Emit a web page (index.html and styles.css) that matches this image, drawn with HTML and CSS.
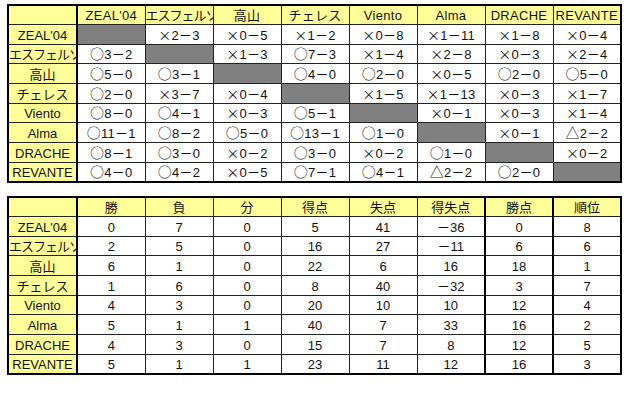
FILE: index.html
```html
<!DOCTYPE html>
<html lang="ja">
<head>
<meta charset="utf-8">
<title>リーグ戦績</title>
<link rel="stylesheet" href="styles.css">
</head>
<body>
<div class="sheet">
  <table class="grid results">
    <colgroup><col class="c-label"><col span="8" class="c-data"></colgroup>
    <tr class="head">
      <td class="label"></td>
      <td>ZEAL'04</td>
      <td class="tight">エスフェルソ</td>
      <td>高山</td>
      <td>チェレス</td>
      <td>Viento</td>
      <td>Alma</td>
      <td>DRACHE</td>
      <td>REVANTE</td>
    </tr>
    <tr>
      <td class="label">ZEAL'04</td>
      <td class="self"></td>
      <td><span class="mk">×</span>2－3</td>
      <td><span class="mk">×</span>0－5</td>
      <td><span class="mk">×</span>1－2</td>
      <td><span class="mk">×</span>0－8</td>
      <td><span class="mk">×</span>1－11</td>
      <td><span class="mk">×</span>1－8</td>
      <td><span class="mk">×</span>0－4</td>
    </tr>
    <tr>
      <td class="label tight">エスフェルソ</td>
      <td><span class="mk o">○</span>3－2</td>
      <td class="self"></td>
      <td><span class="mk">×</span>1－3</td>
      <td><span class="mk o">○</span>7－3</td>
      <td><span class="mk">×</span>1－4</td>
      <td><span class="mk">×</span>2－8</td>
      <td><span class="mk">×</span>0－3</td>
      <td><span class="mk">×</span>2－4</td>
    </tr>
    <tr>
      <td class="label">高山</td>
      <td><span class="mk o">○</span>5－0</td>
      <td><span class="mk o">○</span>3－1</td>
      <td class="self"></td>
      <td><span class="mk o">○</span>4－0</td>
      <td><span class="mk o">○</span>2－0</td>
      <td><span class="mk">×</span>0－5</td>
      <td><span class="mk o">○</span>2－0</td>
      <td><span class="mk o">○</span>5－0</td>
    </tr>
    <tr>
      <td class="label">チェレス</td>
      <td><span class="mk o">○</span>2－0</td>
      <td><span class="mk">×</span>3－7</td>
      <td><span class="mk">×</span>0－4</td>
      <td class="self"></td>
      <td><span class="mk">×</span>1－5</td>
      <td><span class="mk">×</span>1－13</td>
      <td><span class="mk">×</span>0－3</td>
      <td><span class="mk">×</span>1－7</td>
    </tr>
    <tr>
      <td class="label">Viento</td>
      <td><span class="mk o">○</span>8－0</td>
      <td><span class="mk o">○</span>4－1</td>
      <td><span class="mk">×</span>0－3</td>
      <td><span class="mk o">○</span>5－1</td>
      <td class="self"></td>
      <td><span class="mk">×</span>0－1</td>
      <td><span class="mk">×</span>0－3</td>
      <td><span class="mk">×</span>1－4</td>
    </tr>
    <tr>
      <td class="label">Alma</td>
      <td><span class="mk o">○</span>11－1</td>
      <td><span class="mk o">○</span>8－2</td>
      <td><span class="mk o">○</span>5－0</td>
      <td><span class="mk o">○</span>13－1</td>
      <td><span class="mk o">○</span>1－0</td>
      <td class="self"></td>
      <td><span class="mk">×</span>0－1</td>
      <td><span class="mk o">△</span>2－2</td>
    </tr>
    <tr>
      <td class="label">DRACHE</td>
      <td><span class="mk o">○</span>8－1</td>
      <td><span class="mk o">○</span>3－0</td>
      <td><span class="mk">×</span>0－2</td>
      <td><span class="mk o">○</span>3－0</td>
      <td><span class="mk">×</span>0－2</td>
      <td><span class="mk o">○</span>1－0</td>
      <td class="self"></td>
      <td><span class="mk">×</span>0－2</td>
    </tr>
    <tr>
      <td class="label">REVANTE</td>
      <td><span class="mk o">○</span>4－0</td>
      <td><span class="mk o">○</span>4－2</td>
      <td><span class="mk">×</span>0－5</td>
      <td><span class="mk o">○</span>7－1</td>
      <td><span class="mk o">○</span>4－1</td>
      <td><span class="mk o">△</span>2－2</td>
      <td><span class="mk o">○</span>2－0</td>
      <td class="self"></td>
    </tr>
  </table>

  <table class="grid standings">
    <colgroup><col class="c-label"><col span="8" class="c-data"></colgroup>
    <tr class="head">
      <td class="label"></td>
      <td>勝</td><td>負</td><td>分</td><td>得点</td><td>失点</td><td>得失点</td><td class="pts">勝点</td><td>順位</td>
    </tr>
    <tr><td class="label">ZEAL'04</td><td>0</td><td>7</td><td>0</td><td>5</td><td>41</td><td>－36</td><td class="pts">0</td><td>8</td></tr>
    <tr><td class="label tight">エスフェルソ</td><td>2</td><td>5</td><td>0</td><td>16</td><td>27</td><td>－11</td><td class="pts">6</td><td>6</td></tr>
    <tr><td class="label">高山</td><td>6</td><td>1</td><td>0</td><td>22</td><td>6</td><td>16</td><td class="pts">18</td><td>1</td></tr>
    <tr><td class="label">チェレス</td><td>1</td><td>6</td><td>0</td><td>8</td><td>40</td><td>－32</td><td class="pts">3</td><td>7</td></tr>
    <tr><td class="label">Viento</td><td>4</td><td>3</td><td>0</td><td>20</td><td>10</td><td>10</td><td class="pts">12</td><td>4</td></tr>
    <tr><td class="label">Alma</td><td>5</td><td>1</td><td>1</td><td>40</td><td>7</td><td>33</td><td class="pts">16</td><td>2</td></tr>
    <tr><td class="label">DRACHE</td><td>4</td><td>3</td><td>0</td><td>15</td><td>7</td><td>8</td><td class="pts">12</td><td>5</td></tr>
    <tr><td class="label">REVANTE</td><td>5</td><td>1</td><td>1</td><td>23</td><td>11</td><td>12</td><td class="pts">16</td><td>3</td></tr>
  </table>
</div>
</body>
</html>
```

FILE: styles.css
```css
html, body {
  margin: 0;
  background: #ffffff;
}

body {
  font-family: "Liberation Sans", "Noto Sans CJK JP", sans-serif;
  font-size: 13px;
  color: #111111;
}

.sheet {
  display: flex;
  flex-direction: column;
  align-items: flex-start;
  gap: 13px;
  padding: 4px 0 0 7px;
}

.grid {
  border-collapse: collapse;
  table-layout: fixed;
  width: 615px;
  border: 2px solid #000000;
}

.c-label {
  width: 69px;
}

.c-data {
  width: 68px;
}

.grid tr {
  height: 19.67px;
}

.grid td {
  box-sizing: border-box;
  height: 19.67px;
  padding: 0 0 1px 0;
  border: 1px solid #222222;
  text-align: center;
  vertical-align: bottom;
  line-height: 14px;
  white-space: nowrap;
  overflow: hidden;
  background: #ffffff;
}

.grid .head td {
  background: #ffff99;
}

.grid td.label {
  background: #ffff99;
  border-right: 2px solid #000000;
}

.grid td.self {
  background: #808080;
}

.results td:not(.label) {
  letter-spacing: 0.3px;
}

.grid tr td.tight {
  letter-spacing: -1px;
  text-align: left;
}

.mk {
  font-family: "Noto Sans CJK JP", sans-serif;
  line-height: 10px;
}

.mk.o {
  font-size: 14px;
}

.standings td.pts {
  border-left: 2px solid #000000;
  border-right: 2px solid #000000;
}
```
